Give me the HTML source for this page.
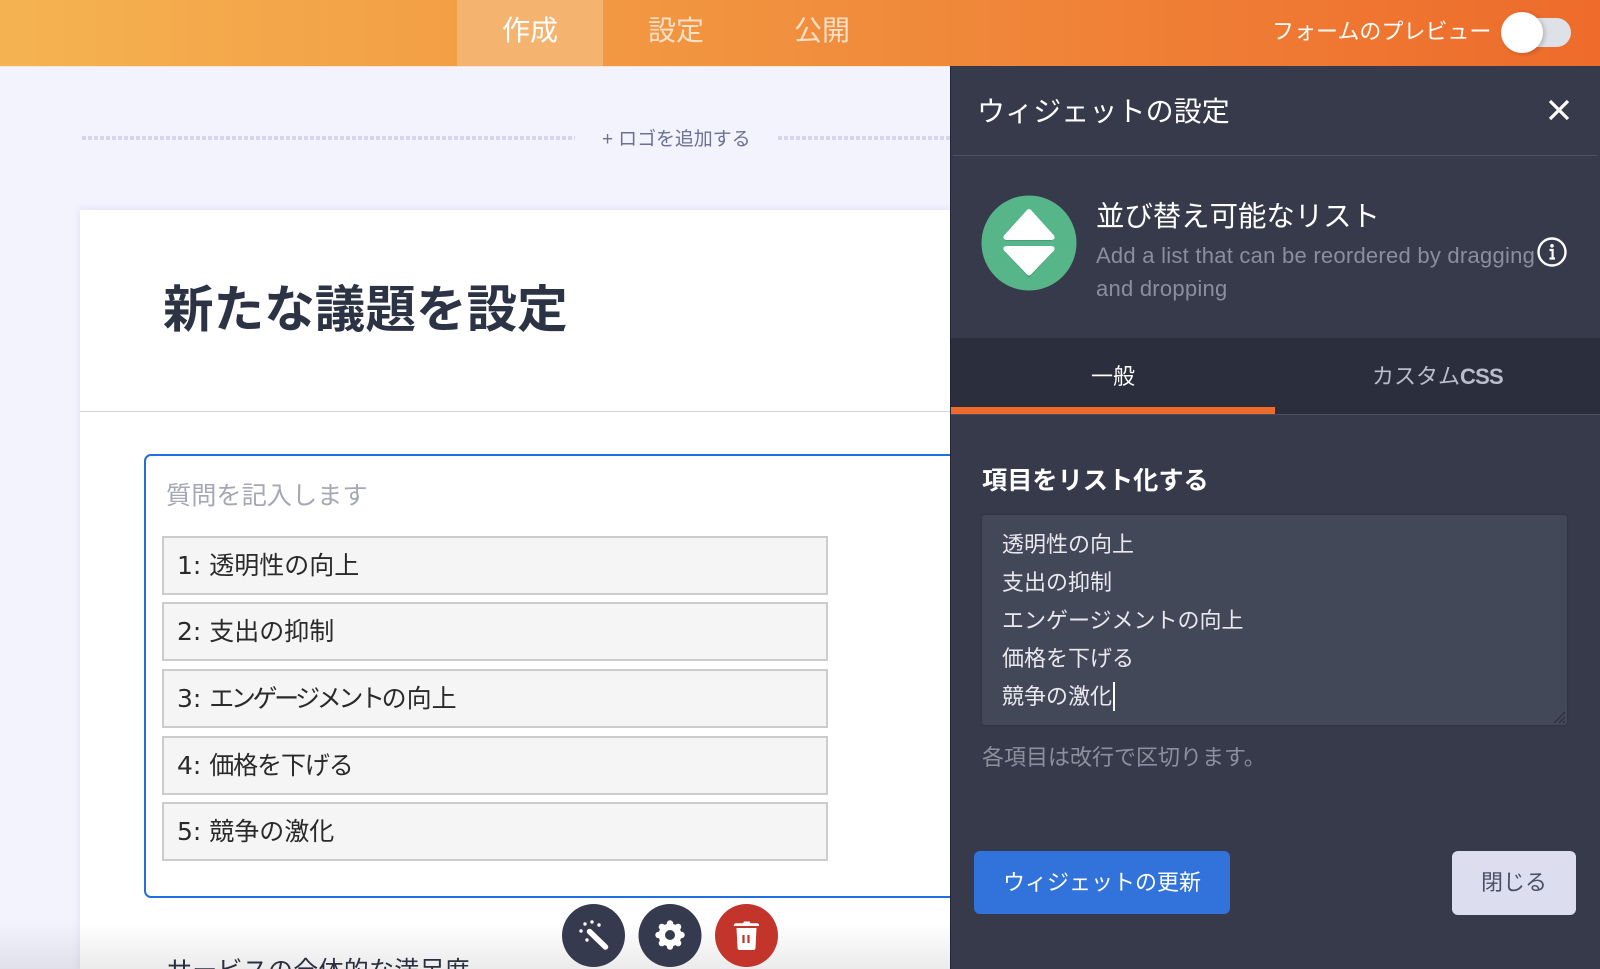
<!DOCTYPE html>
<html lang="ja"><head><meta charset="utf-8"><title>フォーム</title>
<style>
*{box-sizing:border-box}
html,body{margin:0;padding:0;width:1600px;height:969px;overflow:hidden;background:#f3f3fe;font-family:"Liberation Sans","Noto Sans CJK JP",sans-serif}
#wrap{position:relative;width:1600px;height:969px;overflow:hidden}
.t{position:absolute;white-space:nowrap;line-height:1}
.a{position:absolute}
#hdr{left:0;top:0;width:1600px;height:66px;background:linear-gradient(90deg,#f5b350 0%,#f0883a 60%,#ee6b2b 100%)}
.item{position:absolute;left:162px;width:666px;height:59px;background:#f5f5f5;border:2px solid #ccc}
.item span{position:absolute;left:13px;top:15px;font-family:"DejaVu Sans","Noto Sans CJK JP",sans-serif;font-size:25px;line-height:25px;color:#2a2a2a;white-space:nowrap}
</style></head><body><div id="wrap">
<div class="a" id="hdr"></div>
<div class="a" style="left:0;top:66px;width:950px;height:1px;background:#fbe3d2"></div>
<div class="a" style="left:457px;top:0;width:146px;height:66px;background:#f4b470"></div>
<div class="t" style="left:502px;top:17px;font-size:28px;color:#fff">作成</div>
<div class="t" style="left:648px;top:17px;font-size:28px;color:#fde0c8">設定</div>
<div class="t" style="left:794px;top:17px;font-size:28px;color:#fde0c8">公開</div>
<div class="t" style="left:1272px;top:21px;font-size:22px;color:#fff">フォームのプレビュー</div>
<div class="a" style="left:1510px;top:18px;width:61px;height:29px;border-radius:15px;background:#dfe1e8"></div>
<div class="a" style="left:1501px;top:12px;width:42px;height:41px;border-radius:50%;background:#fff;box-shadow:2px 1px 5px rgba(0,0,0,.2)"></div>

<div class="a" style="left:82px;top:136px;width:493px;height:4px;background:repeating-linear-gradient(90deg,#d4d6ee 0 4px,transparent 4px 6px)"></div>
<div class="a" style="left:778px;top:136px;width:172px;height:4px;background:repeating-linear-gradient(90deg,#d4d6ee 0 4px,transparent 4px 6px)"></div>
<div class="t" style="left:602px;top:130px;font-size:19px;letter-spacing:-.1px;color:#6d7195">+ ロゴを追加する</div>

<div class="a" style="left:80px;top:210px;width:880px;height:759px;background:#fff;box-shadow:0 0 8px rgba(90,90,160,.14)"></div>
<div class="t" style="left:163px;top:285px;font-size:50.6px;font-weight:700;color:#2c3345">新たな議題を設定</div>
<div class="a" style="left:80px;top:411px;width:880px;height:1px;background:#d5d5d8"></div>
<div class="a" style="left:144px;top:454px;width:830px;height:444px;border:2.5px solid #1f6fe0;border-radius:7px"></div>
<div class="t" style="left:166px;top:484px;font-size:25.2px;color:#a5a8b4">質問を記入します</div>
<div class="item" style="top:536px"><span>1: 透明性の向上</span></div>
<div class="item" style="top:602px"><span>2: 支出の抑制</span></div>
<div class="item" style="top:669px"><span>3: <span style="position:static;letter-spacing:-3.4px">エンゲージメント</span>の向上</span></div>
<div class="item" style="top:736px"><span>4: <span style="position:static;letter-spacing:-1.1px">価格を下げる</span></span></div>
<div class="item" style="top:802px"><span>5: 競争の激化</span></div>
<div class="t" style="left:167px;top:959px;font-size:25px;letter-spacing:.25px;color:#2c3345">サービスの全体的な満足度</div>
<div class="a" style="left:0;top:922px;width:950px;height:47px;background:linear-gradient(180deg,rgba(0,0,0,0),rgba(0,0,0,.08))"></div>

<svg class="a" style="left:560px;top:902px" width="220" height="67" viewBox="560 902 220 67">
<circle cx="593.5" cy="935.5" r="31.5" fill="#363a4f"/>
<circle cx="670" cy="935.5" r="31.5" fill="#363a4f"/>
<circle cx="746.5" cy="935.5" r="31.5" fill="#c3352b"/>
<path d="M589.500 931.500L605.500 947" stroke="#fff" stroke-width="5.500" stroke-linecap="round"/>
<g fill="#fff"><circle cx="581" cy="931" r="1.700"/><circle cx="585" cy="924" r="1.700"/><circle cx="592" cy="922" r="1.700"/><circle cx="599" cy="925" r="1.700"/><circle cx="587" cy="940" r="1.700"/></g>
<circle cx="670" cy="935" r="11.500" fill="#fff"/>
<g fill="#fff"><circle cx="670" cy="923.500" r="3.200"/><circle cx="670" cy="946.500" r="3.200"/><circle cx="658.500" cy="935" r="3.200"/><circle cx="681.500" cy="935" r="3.200"/><circle cx="661.900" cy="926.900" r="3.200"/><circle cx="678.100" cy="926.900" r="3.200"/><circle cx="661.900" cy="943.100" r="3.200"/><circle cx="678.100" cy="943.100" r="3.200"/></g>
<circle cx="670" cy="935" r="5" fill="#363a4f"/>
<path fill="#fff" d="M734 925c0-1 .8-1.700 2-1.700h7l1-1.800h5.500l1 1.800h6.500c1.200 0 2 .7 2 1.700v1h-25.500zM736.500 928h20l-1 20c-.1 1.200-1 2-2 2h-14c-1 0-1.900-.8-2-2z"/>
<path d="M743.500 935v8M748.500 935v8" stroke="#c3352b" stroke-width="2.200"/>
</svg>

<div class="a" style="left:950px;top:66px;width:650px;height:903px;background:#363a4a;border-left:1px solid #23263a"></div>
<div class="t" style="left:977px;top:98px;font-size:28px;letter-spacing:.1px;color:#fff">ウィジェットの設定</div>
<svg class="a" style="left:1547px;top:98px" width="24" height="24" viewBox="0 0 24 24"><path d="M3 3L21 21M21 3L3 21" stroke="#fff" stroke-width="3.200"/></svg>
<div class="a" style="left:953px;top:155px;width:644px;height:1px;background:#4c5062"></div>

<svg class="a" style="left:981px;top:195px" width="96" height="96" viewBox="0 0 96 96">
<circle cx="48" cy="48" r="47.500" fill="#57b58a"/>
<path d="M48 16L72 41Q74 46 69 46H27Q22 46 24 41Z" fill="#4a9c77"/>
<path d="M48 83L72 57Q74 52 69 52H27Q22 52 24 57Z" fill="#4a9c77"/>
<path d="M46 15Q48 13 50 15L73 40.500Q75 44.500 70 45H26Q21 44.500 23 40.500Z" fill="#fff"/>
<path d="M46 79.500Q48 81.500 50 79.500L73 55.500Q75 51.500 70 51H26Q21 51.500 23 55.500Z" fill="#fff"/>
</svg>
<div class="t" style="left:1096px;top:203px;font-size:28.4px;color:#fff">並び替え可能なリスト</div>
<div class="t" style="left:1096px;top:245px;font-size:22px;letter-spacing:.25px;color:#8a8f9f">Add a list that can be reordered by dragging</div>
<div class="t" style="left:1096px;top:278px;font-size:22px;letter-spacing:.25px;color:#8a8f9f">and dropping</div>
<svg class="a" style="left:1536px;top:236px" width="32" height="32" viewBox="0 0 32 32"><circle cx="16" cy="16" r="13.500" fill="none" stroke="#fff" stroke-width="2.400"/><circle cx="16" cy="9.800" r="1.800" fill="#fff"/><path d="M13.500 14H16.600V22M13.500 22.500H19" stroke="#fff" stroke-width="2.200" fill="none"/></svg>

<div class="a" style="left:951px;top:338px;width:649px;height:77px;background:#2b2e3c;border-bottom:1px solid #4a4e5e"></div>
<div class="a" style="left:951px;top:407px;width:324px;height:7px;background:#ee6b2b"></div>
<div class="t" style="left:1091px;top:366px;font-size:22px;color:#fff">一般</div>
<div class="t" style="left:1372px;top:366px;font-size:22px;color:#b9bdcc">カスタム<b style="letter-spacing:-.8px">CSS</b></div>

<div class="t" style="left:982px;top:469px;font-size:25.2px;font-weight:700;color:#fff">項目をリスト化する</div>
<div class="a" style="left:982px;top:515px;width:585px;height:210px;background:#434859;border-radius:3px;box-shadow:0 0 2px #2b2e3c"></div>
<div class="t" style="left:1002px;top:534px;font-size:22px;color:#e8e8ee">透明性の向上</div>
<div class="t" style="left:1002px;top:572px;font-size:22px;color:#e8e8ee">支出の抑制</div>
<div class="t" style="left:1002px;top:610px;font-size:22px;color:#e8e8ee">エンゲージメントの向上</div>
<div class="t" style="left:1002px;top:648px;font-size:22px;color:#e8e8ee">価格を下げる</div>
<div class="t" style="left:1002px;top:686px;font-size:22px;color:#e8e8ee">競争の激化</div>
<div class="a" style="left:1113px;top:682px;width:1.5px;height:29px;background:#fff"></div>
<svg class="a" style="left:1553px;top:710px" width="13" height="14" viewBox="0 0 13 14"><path d="M1 13L12 2M6 13L12 7M10 13L12 11" stroke="#2b2e3c" stroke-width="1.200"/></svg>
<div class="t" style="left:982px;top:747px;font-size:22px;color:#8d909c">各項目は改行で区切ります。</div>
<div class="a" style="left:974px;top:851px;width:256px;height:63px;background:#3173db;border-radius:6px"></div>
<div class="t" style="left:1003px;top:872px;font-size:22px;color:#fff">ウィジェットの更新</div>
<div class="a" style="left:1452px;top:851px;width:124px;height:64px;background:#dcdef0;border-radius:6px"></div>
<div class="t" style="left:1481px;top:872px;font-size:22px;color:#4b4f63">閉じる</div>
</div></body></html>
